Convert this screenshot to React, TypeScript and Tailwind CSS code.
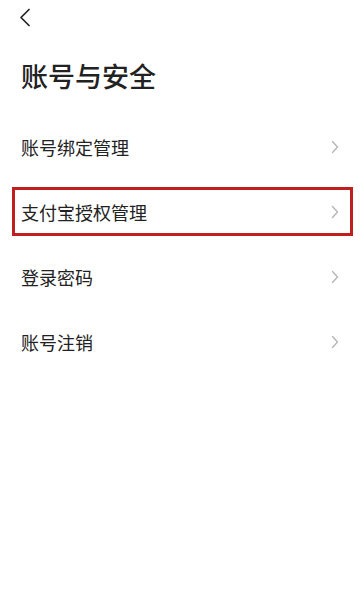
const items = ['账号绑定管理', '支付宝授权管理', '登录密码', '账号注销'];

function Chevron() {
  return (
    <svg width="8" height="14" viewBox="0 0 8 14" fill="none" className="shrink-0">
      <path d="M1.5 1.5 L6.5 7 L1.5 12.5" stroke="#b4b4b4" strokeWidth="1.3" strokeLinecap="round" strokeLinejoin="round" />
    </svg>
  );
}

export default function App() {
  return (
    <div
      className="w-[362px] h-[600px] bg-white text-[#222]"
      style={{ fontFamily: '"Noto Sans CJK SC", "Noto Sans", sans-serif' }}
    >
      {/* Top bar */}
      <div className="h-[34px] flex items-center pl-[19px]">
        <svg width="12" height="19" viewBox="0 0 12 19" fill="none">
          <path d="M10 1.5 L2 9.5 L10 17.5" stroke="#222" strokeWidth="1.7" strokeLinecap="round" strokeLinejoin="round" />
        </svg>
      </div>

      {/* Title */}
      <h1 className="mt-[22px] pl-[21px] text-[27px] leading-[40px] font-medium">账号与安全</h1>

      {/* Settings list */}
      <div className="mt-[18px]">
        {items.map((label, i) => (
          <div key={label} className="h-[65px] flex items-center pl-3 pr-[9px]">
            <div
              className={
                i === 1
                  ? 'flex-1 h-[49px] flex items-center justify-between border-[3px] border-[#bf1f1f] pl-[6px] pr-[11px]'
                  : 'flex-1 h-[49px] flex items-center justify-between border-[3px] border-transparent pl-[6px] pr-[11px]'
              }
            >
              <span className="text-[18px] leading-none">{label}</span>
              <Chevron />
            </div>
          </div>
        ))}
      </div>
    </div>
  );
}
